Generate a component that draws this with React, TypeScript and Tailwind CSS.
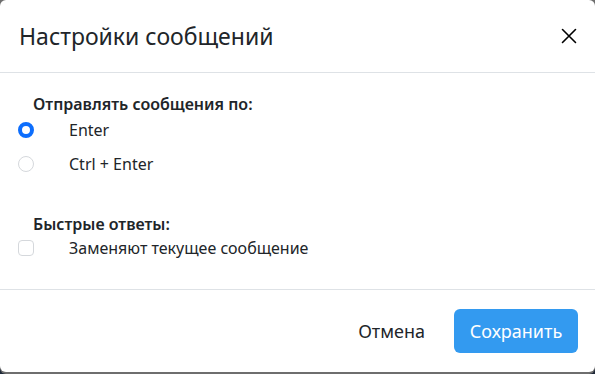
export default function App() {
  const font = { fontFamily: '"Noto Sans", "Open Sans", sans-serif' };
  return (
    <div className="w-[595px] h-[374px] bg-[#1e2838] overflow-hidden" style={font}>
      <div className="w-[595px] h-[374px] bg-[#6e6e6e] rounded-b-[6px]">
        <div className="w-[595px] h-[372px] bg-white rounded-[6px] flex flex-col text-[#212529]">
          <div className="h-[73px] flex items-center justify-between pl-[19px] pr-[14px] border-b border-[#dee2e6]">
            <h5 className="text-[23px] leading-[30px] font-normal">Настройки сообщений</h5>
            <button className="w-[24px] h-[24px] flex items-center justify-center">
              <svg width="16" height="16" viewBox="0 0 16 16" fill="none" stroke="#000" strokeWidth="1.6" strokeLinecap="round">
                <path d="M1.5 1.5 L14.5 14.5 M14.5 1.5 L1.5 14.5" />
              </svg>
            </button>
          </div>
          <div className="flex-1 pt-[20px] pl-[18px]">
            <div className="pl-[15px] text-[16px] leading-[22px] font-semibold">Отправлять сообщения по:</div>
            <label className="flex items-center h-[24px] mt-[3px]">
              <span className="w-[16px] h-[16px] rounded-full border-[4.5px] border-[#0d6efd] bg-white"></span>
              <span className="ml-[35px] text-[16px]">Enter</span>
            </label>
            <label className="flex items-center h-[24px] mt-[10px]">
              <span className="w-[16px] h-[16px] rounded-full border border-[#d5d8dc] bg-white"></span>
              <span className="ml-[35px] text-[16px]">Ctrl + Enter</span>
            </label>
            <div className="pl-[15px] mt-[37px] text-[16px] leading-[22px] font-semibold">Быстрые ответы:</div>
            <label className="flex items-center h-[24px] mt-[1px]">
              <span className="w-[16px] h-[16px] rounded-[4px] border border-[#d5d8dc] bg-white"></span>
              <span className="ml-[35px] text-[16px]">Заменяют текущее сообщение</span>
            </label>
          </div>
          <div className="h-[83px] border-t border-[#dee2e6] flex items-center justify-end pr-[17px] gap-[12px]">
            <button className="h-[44px] px-[17px] text-[18px] text-[#212529]">Отмена</button>
            <button className="h-[44px] w-[124px] rounded-[6px] bg-[#339af0] text-white text-[18px]">Сохранить</button>
          </div>
        </div>
      </div>
    </div>
  );
}
